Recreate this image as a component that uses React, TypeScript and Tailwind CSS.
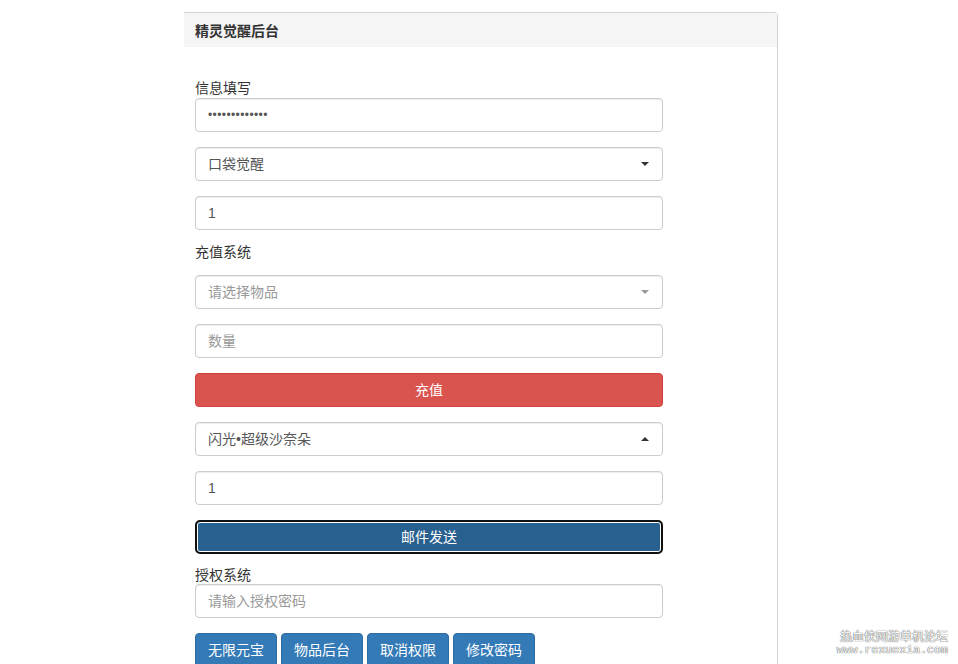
import React from 'react'

const field =
  'h-[34px] w-full rounded-[4px] border border-[#ccc] bg-white px-[12px] text-[14px] leading-[32px] text-[#555] shadow-[inset_0_1px_1px_rgba(0,0,0,0.075)]'

function Caret({ up = false, muted = false }: { up?: boolean; muted?: boolean }) {
  return (
    <span
      className={`absolute right-[13px] top-1/2 -translate-y-1/2 h-0 w-0 border-x-[4px] border-x-transparent ${
        up ? 'border-b-[4px]' : 'border-t-[4px]'
      } ${muted ? 'border-t-[#999] border-b-[#999]' : 'border-t-[#333] border-b-[#333]'}`}
    />
  )
}

function Picker({ label, placeholder = false, up = false }: { label: string; placeholder?: boolean; up?: boolean }) {
  return (
    <div className={`relative ${field} ${placeholder ? 'text-[#999]' : 'text-[#333]'}`}>
      {label}
      <Caret up={up} muted={placeholder} />
    </div>
  )
}

export default function App() {
  const tools = ['无限元宝', '物品后台', '取消权限', '修改密码']

  return (
    <div className="relative h-[664px] overflow-hidden bg-white font-['Liberation_Sans','Noto_Sans_CJK_SC',sans-serif] text-[14px] text-[#333]">
      <div className="ml-[184px] mt-[12px] w-[594px] rounded-tr-[4px] border-t border-r border-[#d4d4d4]">
        {/* Heading */}
        <div className="h-[34px] bg-[#f5f5f5] pl-[11px] text-[14px] leading-[36px] font-bold text-[#333]">
          精灵觉醒后台
        </div>

        <div className="pl-[11px] pt-[32px]">
          <div className="w-[468px]">
            <div className="h-[19px] leading-[19px]">信息填写</div>
            <div className={`${field} flex items-center`}>
              <span className="text-[12px] tracking-[0.4px] text-[#555]">•••••••••••••</span>
            </div>

            <div className="mt-[15px]">
              <Picker label="口袋觉醒" />
            </div>
            <div className={`${field} mt-[15px] text-[#555]`}>1</div>

            <div className="mt-[12px] h-[20px] leading-[20px]">充值系统</div>
            <div className="mt-[13px]">
              <Picker label="请选择物品" placeholder />
            </div>
            <div className={`${field} mt-[15px] text-[#999]`}>数量</div>

            <button className="mt-[15px] block h-[34px] w-full rounded-[4px] border border-[#d43f3a] bg-[#d9534f] text-[14px] text-white">
              充值
            </button>

            <div className="mt-[15px]">
              <Picker label="闪光•超级沙奈朵" up />
            </div>
            <div className={`${field} mt-[15px] text-[#555]`}>1</div>

            <button className="mt-[15px] block h-[34px] w-full rounded-[5px] border-2 border-[#111] bg-[#286090] text-[14px] text-white shadow-[inset_0_0_0_1px_#fff]">
              邮件发送
            </button>

            <div className="mt-[13px] h-[17px] leading-[17px]">授权系统</div>
            <div className={`${field} text-[#999]`}>请输入授权密码</div>

            <div className="mt-[15px] flex gap-[4px]">
              {tools.map((t) => (
                <button
                  key={t}
                  className="h-[34px] rounded-[4px] border border-[#2e6da4] bg-[#337ab7] px-[12px] text-[14px] text-white"
                >
                  {t}
                </button>
              ))}
            </div>
          </div>
        </div>
      </div>

      {/* Forum watermark */}
      <div className="absolute right-[10px] bottom-[8px] flex flex-col items-end text-white">
        <div className="text-[12px] leading-[14px] [text-shadow:0_0_1px_#555,0_0_1px_#555]">热血侠网游单机论坛</div>
        <div className="font-['Liberation_Mono',monospace] text-[11.6px] leading-[12px] [text-shadow:0_0_1px_#555,0_0_1px_#555]">
          www.rexuexia.com
        </div>
      </div>
    </div>
  )
}
